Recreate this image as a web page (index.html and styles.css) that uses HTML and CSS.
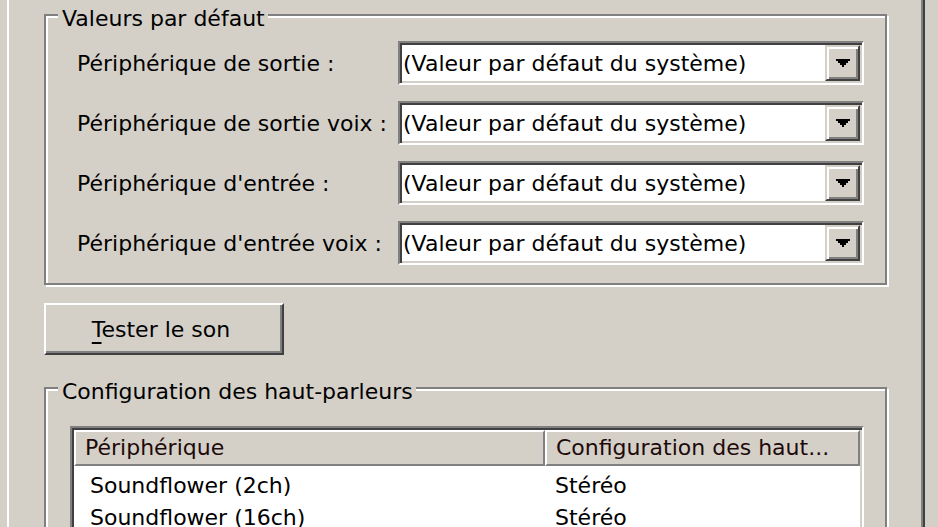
FILE: index.html
```html
<!DOCTYPE html>
<html lang="fr">
<head>
  <meta charset="UTF-8">
  <title>Audio - Propriétés</title>
  <link rel="stylesheet" href="styles.css">
</head>
<body>
  <div class="tab-page">

    <div class="group defaults">
      <span class="group-title">Valeurs par défaut</span>

      <div class="device-row">
        <label>Périphérique de sortie :</label>
        <div class="combo">
          <span class="combo-value">(Valeur par défaut du système)</span>
          <span class="combo-button"><svg width="14" height="8" viewBox="0 0 14 8"><path d="M0 0h14v2h-2v2h-2v2h-2v2h-2v-2h-2v-2h-2v-2h-2z" fill="#000"/></svg></span>
        </div>
      </div>

      <div class="device-row">
        <label>Périphérique de sortie voix :</label>
        <div class="combo">
          <span class="combo-value">(Valeur par défaut du système)</span>
          <span class="combo-button"><svg width="14" height="8" viewBox="0 0 14 8"><path d="M0 0h14v2h-2v2h-2v2h-2v2h-2v-2h-2v-2h-2v-2h-2z" fill="#000"/></svg></span>
        </div>
      </div>

      <div class="device-row">
        <label>Périphérique d'entrée :</label>
        <div class="combo">
          <span class="combo-value">(Valeur par défaut du système)</span>
          <span class="combo-button"><svg width="14" height="8" viewBox="0 0 14 8"><path d="M0 0h14v2h-2v2h-2v2h-2v2h-2v-2h-2v-2h-2v-2h-2z" fill="#000"/></svg></span>
        </div>
      </div>

      <div class="device-row">
        <label>Périphérique d'entrée voix :</label>
        <div class="combo">
          <span class="combo-value">(Valeur par défaut du système)</span>
          <span class="combo-button"><svg width="14" height="8" viewBox="0 0 14 8"><path d="M0 0h14v2h-2v2h-2v2h-2v2h-2v-2h-2v-2h-2v-2h-2z" fill="#000"/></svg></span>
        </div>
      </div>
    </div>

    <button class="push-button"><u>T</u>ester le son</button>

    <div class="group speakers">
      <span class="group-title">Configuration des haut-parleurs</span>

      <div class="list-view">
        <div class="list-header">
          <div class="header-cell">Périphérique</div>
          <div class="header-cell">Configuration des haut...</div>
        </div>
        <div class="list-body">
          <div class="list-row">
            <span class="cell-device">Soundflower (2ch)</span>
            <span class="cell-config">Stéréo</span>
          </div>
          <div class="list-row">
            <span class="cell-device">Soundflower (16ch)</span>
            <span class="cell-config">Stéréo</span>
          </div>
        </div>
      </div>
    </div>

  </div>
</body>
</html>
```

FILE: styles.css
```css
body {
  margin: 0;
  background: #d4d0c8;
  font-family: "DejaVu Sans", Verdana, sans-serif;
  font-size: 22px;
  color: #000;
  overflow: hidden;
}

.tab-page {
  margin-left: 7px;
  width: 918px;
  height: 527px;
  box-sizing: border-box;
  border-left: 2px solid #fff;
  border-right: 2px solid #404040;
  box-shadow: inset -2px 0 0 #808080;
  padding-top: 14px;
}

/* etched group box */
.group {
  position: relative;
  margin-left: 35px;
  width: 843px;
  box-sizing: border-box;
  border: 2px solid #808080;
  box-shadow: inset 2px 2px 0 #fff, 2px 2px 0 #fff;
}

.group-title {
  position: absolute;
  top: -10px;
  left: 12px;
  padding: 0 3px 0 4px;
  background: #d4d0c8;
  line-height: 26px;
  white-space: nowrap;
}

.defaults {
  height: 271px;
  padding: 25px 0 0 0;
  display: flex;
  flex-direction: column;
  gap: 16px;
}

.device-row {
  display: grid;
  grid-template-columns: 321px 466px;
  align-items: center;
  padding-left: 31px;
  height: 44px;
}

.device-row label {
  white-space: nowrap;
}

/* sunken combo box */
.combo {
  height: 44px;
  box-sizing: border-box;
  display: flex;
  align-items: stretch;
  background: #fff;
  border: 2px solid;
  border-color: #808080 #fff #fff #808080;
  box-shadow: inset 2px 2px 0 #404040, inset -2px -2px 0 #d4d0c8;
  padding: 2px;
}

.combo-value {
  flex: 1;
  display: flex;
  align-items: center;
  padding-left: 1px;
  white-space: nowrap;
}

.combo-button {
  width: 35px;
  box-sizing: border-box;
  display: flex;
  align-items: center;
  justify-content: center;
  background: #d4d0c8;
  border: 2px solid;
  border-color: #d4d0c8 #404040 #404040 #d4d0c8;
  box-shadow: inset 2px 2px 0 #fff, inset -2px -2px 0 #808080;
}

.push-button {
  display: block;
  margin: 18px 0 0 35px;
  width: 240px;
  height: 52px;
  box-sizing: border-box;
  background: #d4d0c8;
  font: inherit;
  color: #000;
  border: 2px solid;
  border-color: #fff #404040 #404040 #fff;
  box-shadow: inset -2px -2px 0 #808080;
  padding: 0 6px 0 0;
}

.push-button u {
  text-decoration-thickness: 2px;
  text-underline-offset: 5px;
}

.speakers {
  margin-top: 32px;
  height: 200px;
  padding: 37px 0 0 24px;
}

/* list view */
.list-view {
  width: 794px;
  height: 200px;
  box-sizing: border-box;
  background: #fff;
  border: 2px solid;
  border-color: #808080 #fff #fff #808080;
  box-shadow: inset 2px 2px 0 #404040, inset -2px -2px 0 #d4d0c8;
  padding: 2px;
}

.list-header {
  display: grid;
  grid-template-columns: 471px 315px;
  height: 36px;
}

.header-cell {
  box-sizing: border-box;
  background: #d4d0c8;
  color: #1e0a0a;
  border: 2px solid;
  border-color: #fff #808080 #808080 #fff;
  padding-left: 9px;
  line-height: 32px;
  white-space: nowrap;
  overflow: hidden;
}

.list-body {
  padding-top: 4px;
}

.list-row {
  display: grid;
  grid-template-columns: 471px 315px;
  line-height: 32px;
}

.cell-device {
  padding-left: 16px;
}

.cell-config {
  padding-left: 10px;
}
```
